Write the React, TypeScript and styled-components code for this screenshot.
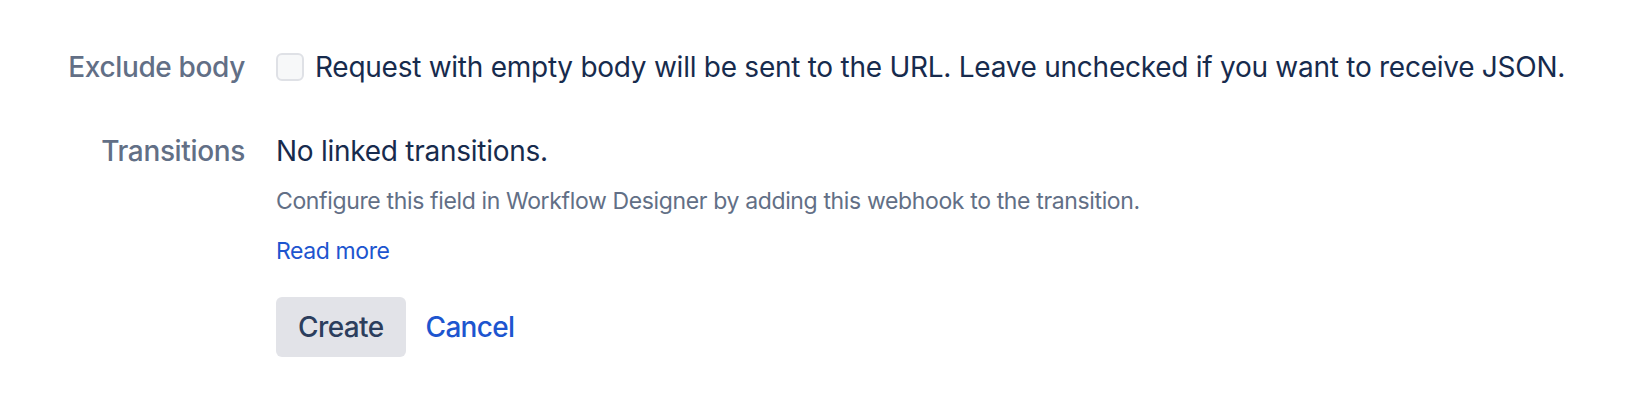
import React, { useState } from 'react';
import styled, { createGlobalStyle } from 'styled-components';

const GlobalStyle = createGlobalStyle`
  body {
    margin: 0;
    background: #ffffff;
    font-family: Inter, 'Noto Sans', sans-serif;
  }
`;

const FormContainer = styled.div`
  padding: 47px 0 0 0;
  display: grid;
  grid-template-columns: 245px 1fr;
  column-gap: 31px;
  row-gap: 44px;
  align-items: start;
`;

const FieldLabel = styled.div`
  font-size: 28px;
  line-height: 40px;
  font-weight: 500;
  letter-spacing: -0.35px;
  color: #626f86;
  text-align: right;
`;

const FieldContent = styled.div`
  display: flex;
  flex-direction: column;
  align-items: flex-start;
`;

const CheckboxRow = styled.label`
  display: flex;
  align-items: center;
  gap: 11px;
  cursor: pointer;
`;

const CheckboxBox = styled.span<{ checked: boolean }>`
  width: 24px;
  height: 24px;
  border: 2px solid #dfe1e6;
  border-radius: 6px;
  background: ${({ checked }) => (checked ? '#0c66e4' : '#f7f8f9')};
  flex-shrink: 0;
`;

const MainText = styled.span`
  font-size: 28px;
  line-height: 40px;
  letter-spacing: -0.26px;
  color: #172b4d;
`;

const HelperText = styled.div`
  margin-top: 14px;
  font-size: 23px;
  line-height: 32px;
  letter-spacing: -0.36px;
  color: #626f86;
`;

const TextLink = styled.a`
  margin-top: 18px;
  font-size: 23px;
  line-height: 32px;
  letter-spacing: -0.4px;
  color: #1d55cf;
  text-decoration: none;
  cursor: pointer;
`;

const ButtonBar = styled.div`
  margin-top: 30px;
  display: flex;
  align-items: center;
  gap: 20px;
`;

const PrimaryButton = styled.button`
  height: 60px;
  padding: 0 22px;
  border: none;
  border-radius: 6px;
  background: #e2e3e8;
  font-family: inherit;
  font-size: 28px;
  font-weight: 500;
  letter-spacing: -0.6px;
  color: #2c3e5d;
  cursor: pointer;
`;

const LinkButton = styled.button`
  height: 60px;
  padding: 0;
  border: none;
  background: transparent;
  font-family: inherit;
  font-size: 28px;
  font-weight: 500;
  letter-spacing: -0.7px;
  color: #1d55cf;
  cursor: pointer;
`;

const App = () => {
  const [excludeBody, setExcludeBody] = useState(false);

  return (
    <>
      <GlobalStyle />
      <FormContainer>
        <FieldLabel>Exclude body</FieldLabel>
        <FieldContent>
          <CheckboxRow onClick={() => setExcludeBody(!excludeBody)}>
            <CheckboxBox checked={excludeBody} />
            <MainText>
              Request with empty body will be sent to the URL. Leave unchecked if you want to receive JSON.
            </MainText>
          </CheckboxRow>
        </FieldContent>

        <FieldLabel>Transitions</FieldLabel>
        <FieldContent>
          <MainText>No linked transitions.</MainText>
          <HelperText>
            Configure this field in Workflow Designer by adding this webhook to the transition.
          </HelperText>
          <TextLink>Read more</TextLink>
          <ButtonBar>
            <PrimaryButton>Create</PrimaryButton>
            <LinkButton>Cancel</LinkButton>
          </ButtonBar>
        </FieldContent>
      </FormContainer>
    </>
  );
};

export default App;
